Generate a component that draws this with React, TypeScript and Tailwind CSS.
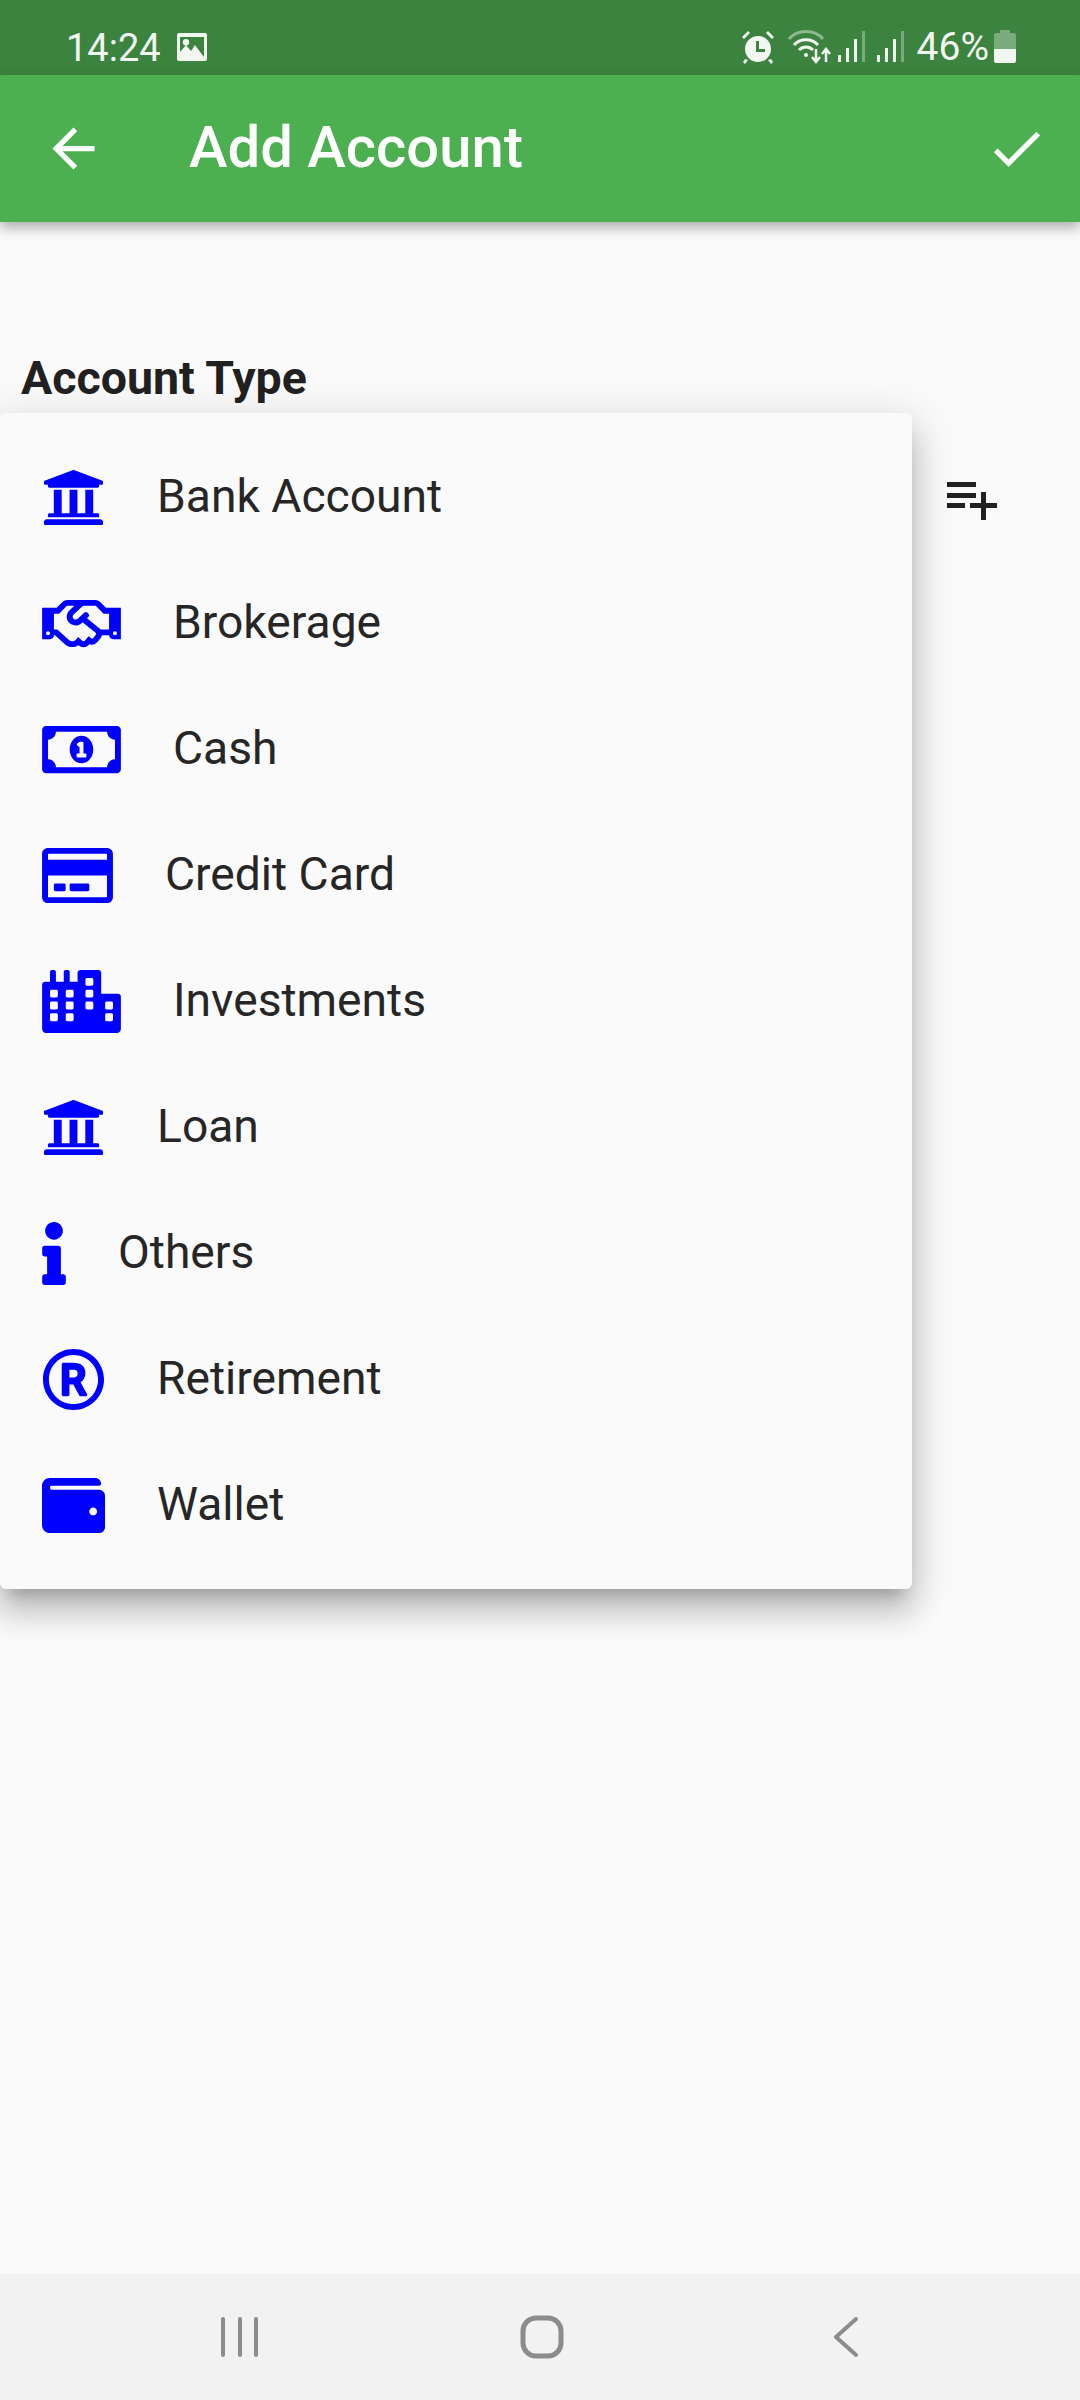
import type { IconType } from "react-icons";
import {
  FaCity,
  FaInfo,
  FaRegCreditCard,
  FaRegHandshake,
  FaRegMoneyBillAlt,
  FaRegRegistered,
  FaUniversity,
  FaWallet,
} from "react-icons/fa";

const accountTypes: { label: string; icon: IconType; iconClass: string }[] = [
  { label: "Bank Account", icon: FaUniversity, iconClass: "h-[63px] w-[63px]" },
  { label: "Brokerage", icon: FaRegHandshake, iconClass: "h-[63px] w-[79px]" },
  { label: "Cash", icon: FaRegMoneyBillAlt, iconClass: "h-[63px] w-[79px]" },
  { label: "Credit Card", icon: FaRegCreditCard, iconClass: "h-[63px] w-[71px]" },
  { label: "Investments", icon: FaCity, iconClass: "h-[63px] w-[79px]" },
  { label: "Loan", icon: FaUniversity, iconClass: "h-[63px] w-[63px]" },
  { label: "Others", icon: FaInfo, iconClass: "h-[63px] w-[24px]" },
  { label: "Retirement", icon: FaRegRegistered, iconClass: "h-[63px] w-[63px]" },
  { label: "Wallet", icon: FaWallet, iconClass: "h-[63px] w-[63px]" },
];

const SignalIcon = () => (
  <svg width="28" height="32" viewBox="0 0 28 32" fill="#f1f6f1">
    <rect x="0" y="24" width="3" height="7" />
    <rect x="8" y="17" width="3" height="14" />
    <rect x="16" y="8" width="3" height="23" />
    <rect x="24" y="0" width="3" height="31" opacity="0.35" />
  </svg>
);

const StatusBar = () => (
  <div className="flex h-[75px] shrink-0 items-center bg-[#3b833f] pl-[66px] pr-[64px] pt-[18px] text-[#f1f6f1]">
    <span className="mt-[2px] text-[38px] leading-none">14:24</span>
    <svg className="ml-[16px]" width="30" height="28" viewBox="0 0 30 28">
      <path fillRule="evenodd" fill="#f1f6f1" d="M2 0h26a2 2 0 0 1 2 2v24a2 2 0 0 1-2 2H2a2 2 0 0 1-2-2V2a2 2 0 0 1 2-2zM3 4v15l6-7 5 6 4-6 9 12V4zM9 6a3.2 3.2 0 1 1 0 6.4A3.2 3.2 0 0 1 9 6z" />
    </svg>
    <div className="ml-auto flex items-center">
      <svg width="34" height="34" viewBox="0 0 34 34" fill="#f1f6f1">
        <path fillRule="evenodd" d="M17 6a13 13 0 1 1 0 26 13 13 0 0 1 0-26zM15 11v11h9v-3h-6v-8z" />
        <path d="M1 7l6-6 2 2-6 6zM33 7l-6-6-2 2 6 6zM4 29l3 1-3 4-2-2zM30 29l-3 1 3 4 2-2z" />
      </svg>
      <svg className="ml-[13px]" width="44" height="34" viewBox="0 0 44 34" fill="none" stroke="#f1f6f1" strokeWidth="3">
        <path d="M1 9C9 -1 27 -1 35 9" opacity="0.45" />
        <path d="M6 15C12 8 24 8 30 15" />
        <path d="M11 20C15 16 21 16 25 20" />
        <circle cx="18" cy="25" r="2" fill="#f1f6f1" stroke="none" />
        <path d="M28 19v12M24 27l4 5 4-5M38 32V20M34 24l4-5 4 5" strokeWidth="2.5" />
      </svg>
      <div className="ml-[6px] flex gap-[11px]">
        <SignalIcon />
        <SignalIcon />
      </div>
      <span className="ml-[12px] mt-[2px] text-[39px] leading-none">46%</span>
      <svg className="ml-[5px]" width="22" height="33" viewBox="0 0 22 33">
        <path fill="#f1f6f1" opacity="0.35" d="M6 0h10v3h4a2 2 0 0 1 2 2v14H0V5a2 2 0 0 1 2-2h4z" />
        <path fill="#f1f6f1" d="M0 19h22v12a2 2 0 0 1-2 2H2a2 2 0 0 1-2-2z" />
      </svg>
    </div>
  </div>
);

const AppBar = () => (
  <header className="relative z-10 flex h-[147px] shrink-0 items-center bg-[#4caf50] pl-[42px] pr-[32px] text-white shadow-[0_6px_12px_rgba(0,0,0,0.3)]">
    <svg width="63" height="63" viewBox="0 0 24 24" fill="currentColor">
      <path d="M20 11H7.83l5.59-5.59L12 4l-8 8 8 8 1.41-1.41L7.83 13H20v-2z" />
    </svg>
    <h1 className="mb-[3px] ml-[84px] text-[58px] font-medium leading-none">Add Account</h1>
    <svg className="ml-auto" width="63" height="63" viewBox="0 0 24 24" fill="currentColor">
      <path d="M9 16.17L4.83 12l-1.42 1.41L9 19 21 7l-1.41-1.41z" />
    </svg>
  </header>
);

const NavBar = () => (
  <nav className="flex h-[126px] shrink-0 items-center bg-[#f2f2f2] pl-[220px] text-[#8c8c8c]">
    <svg width="40" height="42" viewBox="0 0 40 42" fill="none" stroke="currentColor" strokeWidth="4" strokeLinecap="round">
      <path d="M3 3v36M20 3v36M36 3v36" />
    </svg>
    <svg className="ml-[260px]" width="44" height="44" viewBox="0 0 44 44" fill="none" stroke="currentColor" strokeWidth="5">
      <rect x="3" y="3" width="38" height="38" rx="13" />
    </svg>
    <svg className="ml-[269px]" width="26" height="42" viewBox="0 0 26 42" fill="none" stroke="currentColor" strokeWidth="4" strokeLinecap="round" strokeLinejoin="round">
      <path d="M23 3L3 21l20 18" />
    </svg>
  </nav>
);

export default function App() {
  return (
    <div className="relative flex h-[2400px] w-[1080px] flex-col overflow-hidden bg-[#fafafa] font-['Roboto',sans-serif] text-[#212121]">
      <StatusBar />
      <AppBar />
      <main className="flex-1 px-[21px] pt-[132px]">
        <h2 className="text-[46.5px] font-bold leading-[48px]">Account Type</h2>
        <div className="mt-[80px] flex justify-end pr-[62px]">
          <svg width="50" height="38" viewBox="0 0 50 38" fill="#212121">
            <rect x="0" y="0" width="29" height="5" />
            <rect x="0" y="11" width="29" height="5" />
            <rect x="0" y="21" width="18" height="5" />
            <rect x="23" y="21" width="27" height="5" />
            <rect x="34" y="10" width="5" height="28" />
          </svg>
        </div>
      </main>
      <NavBar />

      <div className="absolute left-0 top-[413px] flex h-[1176px] w-[912px] flex-col rounded-[6px] bg-[#fafafa] pt-[21px] shadow-[0_15px_15px_-9px_rgba(0,0,0,0.2),0_24px_30px_3px_rgba(0,0,0,0.14),0_9px_42px_6px_rgba(0,0,0,0.12)]">
        {accountTypes.map(({ label, icon: Icon, iconClass }) => (
          <div key={label} className="flex h-[126px] shrink-0 items-center pl-[42px]">
            <Icon className={iconClass} color="#0000ff" />
            <span className="mb-[1px] ml-[52px] text-[46.2px] leading-none text-[#262626]">{label}</span>
          </div>
        ))}
      </div>
    </div>
  );
}
